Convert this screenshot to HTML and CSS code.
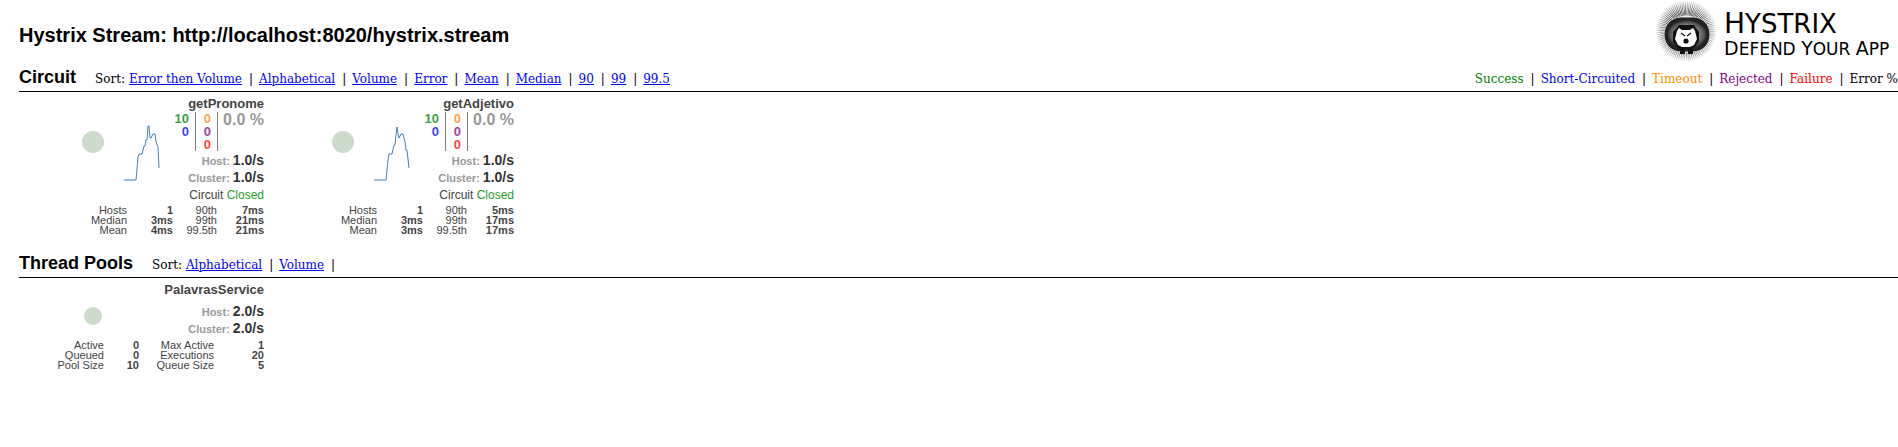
FILE: index.html
```html
<!DOCTYPE html>
<html lang="en">
<head>
<meta charset="utf-8">
<title>Hystrix Monitor</title>
<link rel="stylesheet" href="styles.css">
</head>
<body>
<header class="top">
  <h1 class="title">Hystrix Stream: http://localhost:8020/hystrix.stream</h1>
  <div class="brand">
    <svg class="logo" viewBox="0 0 66 62" aria-hidden="true">
      <defs>
        <radialGradient id="quills" gradientUnits="userSpaceOnUse" cx="33" cy="31" r="31">
          <stop offset="0.6" stop-color="#222"/><stop offset="1" stop-color="#222" stop-opacity="0"/>
        </radialGradient>
        <radialGradient id="fur">
          <stop offset="0.5" stop-color="#999"/><stop offset="0.85" stop-color="#555"/><stop offset="1" stop-color="#222"/>
        </radialGradient>
      </defs>
      <circle cx="33" cy="31" r="23" pathLength="180" fill="none" stroke="url(#quills)" stroke-width="15" stroke-dasharray="1 1"/>
      <rect x="11" y="17" width="46" height="35" rx="17" fill="#222" stroke="#ddd"/>
      <rect x="14" y="20" width="40" height="29" rx="14" fill="url(#fur)"/>
      <path d="M26 25H41L46 32V42L40 49H26L20 42V32Z" fill="#111"/>
      <path d="M24 31L26 28L29 30H37L40 28L42 31L44 39L41 45L37 47H29L25 45L22 39Z" fill="#fff"/>
      <path d="M28 33L32 36M38 33L34 36" stroke="#111" stroke-width="1.3"/>
      <circle cx="33" cy="41" r="2.6" fill="#111"/>
      <path d="M27 48H32V54H27Z M35 48H40V54H35Z" fill="#111"/>
    </svg>
    <div class="wordmark">
      <div class="name"><span class="cap">H</span>YSTRIX</div>
      <div class="tag"><span class="cap">D</span>EFEND <span class="cap">Y</span>OUR <span class="cap">A</span>PP</div>
    </div>
  </div>
</header>
<main>
  <section class="group">
    <div class="bar">
      <h2 class="heading">Circuit</h2>
      <nav class="sort">Sort: <a href="#">Error then Volume</a><i>|</i><a href="#">Alphabetical</a><i>|</i><a href="#">Volume</a><i>|</i><a href="#">Error</a><i>|</i><a href="#">Mean</a><i>|</i><a href="#">Median</a><i>|</i><a href="#">90</a><i>|</i><a href="#">99</a><i>|</i><a href="#">99.5</a></nav>
      <div class="legend"><span class="success">Success</span><i>|</i><span class="short">Short-Circuited</span><i>|</i><span class="timeout">Timeout</span><i>|</i><span class="rejected">Rejected</span><i>|</i><span class="failure">Failure</span><i>|</i><span>Error %</span></div>
    </div>
    <div class="cards">
      <article class="card">
        <h3 class="card-name">getPronome</h3>
        <div class="main">
          <svg class="chart" viewBox="0 0 120 84" aria-hidden="true"><circle cx="24" cy="30" r="11" fill="#ccdbcc"/><path d="M55 68H67L69 45L70 42H73L75 34H76L77 28H78L79 14H80L81 26H82L84 22H86L87 30L89 35L90 56" fill="none" stroke="#4682b4"/></svg>
          <div class="stats">
            <div class="counts">
              <div class="col"><b class="success">10</b><b class="short">0</b></div>
              <div class="col"><b class="timeout">0</b><b class="rejected">0</b><b class="failure">0</b></div>
              <div class="percent">0.0 %</div>
            </div>
            <div class="rate">Host: <b>1.0/s</b></div>
            <div class="rate">Cluster: <b>1.0/s</b></div>
            <div class="state">Circuit <span class="closed">Closed</span></div>
          </div>
        </div>
        <table class="latency">
          <colgroup><col class="c1"><col class="c2"><col class="c3"><col class="c4"></colgroup>
          <tr><th>Hosts</th><td>1</td><th>90th</th><td>7ms</td></tr>
          <tr><th>Median</th><td>3ms</td><th>99th</th><td>21ms</td></tr>
          <tr><th>Mean</th><td>4ms</td><th>99.5th</th><td>21ms</td></tr>
        </table>
      </article>
      <article class="card">
        <h3 class="card-name">getAdjetivo</h3>
        <div class="main">
          <svg class="chart" viewBox="0 0 120 84" aria-hidden="true"><circle cx="24" cy="30" r="11" fill="#ccdbcc"/><path d="M55 68H67L69 48L70 42H73L75 33H76L77 23L78 15L79 22L80 26L82 22H84L86 30L87 38H88L90 56" fill="none" stroke="#4682b4"/></svg>
          <div class="stats">
            <div class="counts">
              <div class="col"><b class="success">10</b><b class="short">0</b></div>
              <div class="col"><b class="timeout">0</b><b class="rejected">0</b><b class="failure">0</b></div>
              <div class="percent">0.0 %</div>
            </div>
            <div class="rate">Host: <b>1.0/s</b></div>
            <div class="rate">Cluster: <b>1.0/s</b></div>
            <div class="state">Circuit <span class="closed">Closed</span></div>
          </div>
        </div>
        <table class="latency">
          <colgroup><col class="c1"><col class="c2"><col class="c3"><col class="c4"></colgroup>
          <tr><th>Hosts</th><td>1</td><th>90th</th><td>5ms</td></tr>
          <tr><th>Median</th><td>3ms</td><th>99th</th><td>17ms</td></tr>
          <tr><th>Mean</th><td>3ms</td><th>99.5th</th><td>17ms</td></tr>
        </table>
      </article>
    </div>
  </section>
  <section class="group">
    <div class="bar">
      <h2 class="heading">Thread Pools</h2>
      <nav class="sort">Sort: <a href="#">Alphabetical</a><i>|</i><a href="#">Volume</a><i>|</i></nav>
    </div>
    <div class="cards">
      <article class="card pool">
        <h3 class="card-name">PalavrasService</h3>
        <div class="main">
          <svg class="chart" viewBox="0 0 120 42" aria-hidden="true"><circle cx="24" cy="18" r="9" fill="#ccdbcc"/></svg>
          <div class="stats">
            <div class="rate">Host: <b>2.0/s</b></div>
            <div class="rate">Cluster: <b>2.0/s</b></div>
          </div>
        </div>
        <table class="latency">
          <colgroup><col class="p1"><col class="p2"><col class="p3"><col class="p4"></colgroup>
          <tr><th>Active</th><td>0</td><th>Max Active</th><td>1</td></tr>
          <tr><th>Queued</th><td>0</td><th>Executions</th><td>20</td></tr>
          <tr><th>Pool Size</th><td>10</td><th>Queue Size</th><td>5</td></tr>
        </table>
      </article>
    </div>
  </section>
</main>
</body>
</html>
```
FILE: styles.css
```css
* { box-sizing: border-box; }
body { margin: 0; font-family: "Liberation Sans", Arial, sans-serif; background: #fff; color: #000; overflow-x: hidden; }
h1, h2, h3 { margin: 0; font-weight: bold; }
.top { display: flex; justify-content: space-between; align-items: flex-start; height: 64px; padding: 0 4px 0 19px; }
.title { font-size: 20px; line-height: 24px; padding-top: 23px; }
.brand { display: flex; gap: 5px; color: #000; font-family: "DejaVu Sans", sans-serif; }
.logo { width: 66px; height: 62px; }
.wordmark { min-width: 170px; padding-top: 10px; white-space: nowrap; }
.name { font-size: 26px; line-height: 28px; }
.name .cap { font-size: 28px; }
.tag { font-size: 17px; line-height: 20px; }
.tag .cap { font-size: 19px; }
.group { padding-left: 19px; }
.bar { display: flex; align-items: baseline; height: 28px; border-bottom: 1px solid #000; white-space: nowrap; }
.heading { font-size: 18px; line-height: 26px; }
.sort, .legend { font-family: "DejaVu Serif", serif; font-size: 12px; line-height: 20px; }
.sort { padding-left: 19px; }
.sort a { color: #00f; }
.legend { margin-left: auto; }
.sort i, .legend i { font-style: normal; padding: 0 6px 0 7px; }
.success { color: #008000; }
.short { color: #00f; }
.timeout { color: #ff8c00; }
.rejected { color: #800080; }
.failure { color: #f00; }
.cards { display: flex; gap: 5px; height: 158px; }
.card { width: 245px; padding-top: 4px; color: #444; text-align: right; }
.card-name { font-size: 13px; line-height: 16px; }
.main { display: flex; justify-content: space-between; min-height: 93px; }
.pool .main { min-height: 42px; }
.chart { width: 120px; height: 84px; flex: none; margin-left: 50px; }
.pool .chart { height: 42px; }
.stats { flex: none; margin-left: -40px; white-space: nowrap; }
.pool .stats { padding-top: 5px; }
.counts { display: flex; justify-content: flex-end; height: 39px; opacity: 0.75; margin-bottom: 1px; }
.col { width: 22px; padding-right: 6px; border-right: 1px solid #555; font-size: 13px; line-height: 13px; }
.col b { display: block; }
.percent { width: 46px; color: #777; font-size: 16px; line-height: 16px; font-weight: bold; }
.rate { height: 17px; font-size: 11px; line-height: 17px; font-weight: bold; color: #999; }
.rate b { font-size: 14px; color: #333; }
.state { font-size: 12px; line-height: 18px; }
.closed { color: #2ca02c; }
.latency { width: 100%; border-collapse: collapse; table-layout: fixed; font-size: 11px; line-height: 10px; }
.latency th, .latency td { padding: 0; font-weight: normal; }
.latency td { font-weight: bold; }
.c1 { width: 108px; }
.c2 { width: 46px; }
.c3 { width: 44px; }
.c4 { width: 47px; }
.p1 { width: 85px; }
.p2 { width: 35px; }
.p3 { width: 75px; }
.p4 { width: 50px; }
```
